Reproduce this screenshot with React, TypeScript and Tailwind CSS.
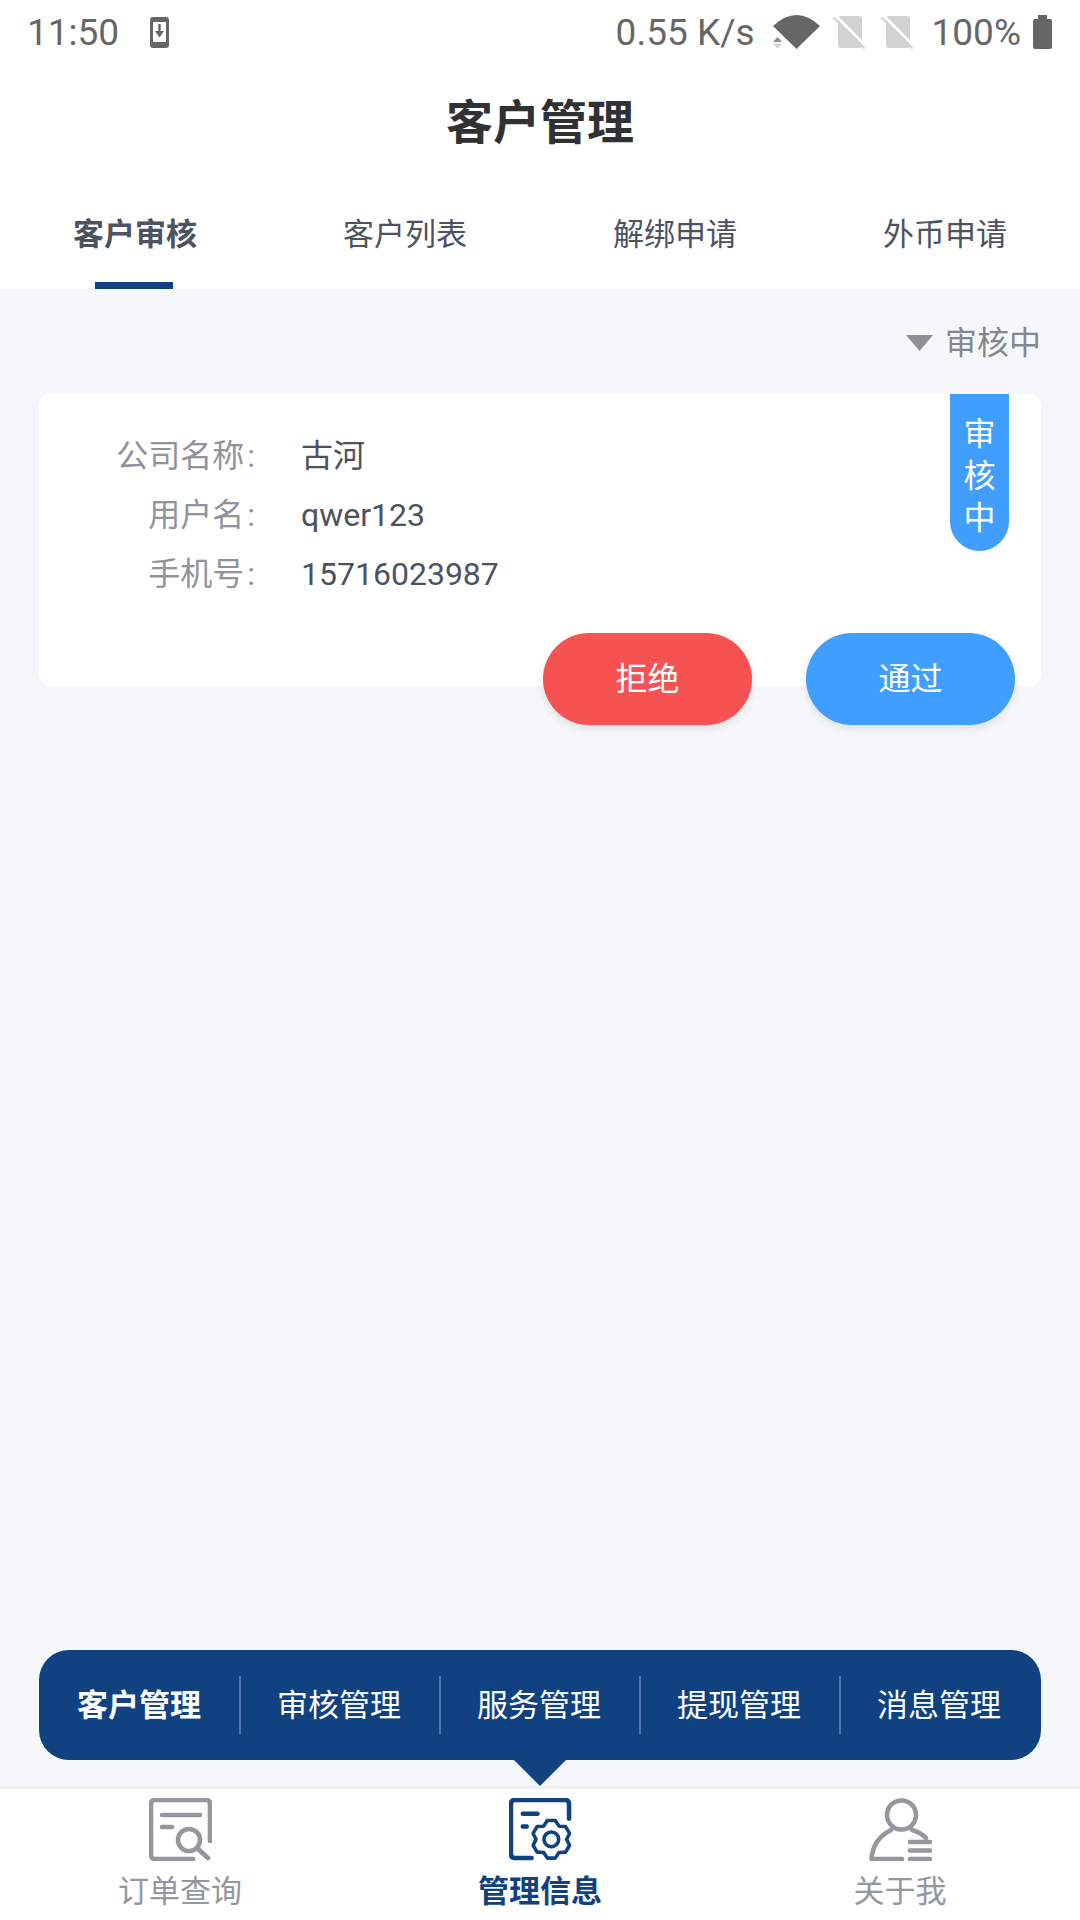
const fontStack = { fontFamily: '"Roboto", "Noto Sans CJK SC", sans-serif' };

const tabs = ["客户审核", "客户列表", "解绑申请", "外币申请"];
const menus = ["客户管理", "审核管理", "服务管理", "提现管理", "消息管理"];
const rows = [
  { label: "公司名称", value: "古河" },
  { label: "用户名", value: "qwer123" },
  { label: "手机号", value: "15716023987" },
];

const gearPath = () => {
  const cx = 43;
  const cy = 42;
  const pts: string[] = [];
  for (let k = 0; k < 6; k++) {
    const a = ((k * 60 - 90) * Math.PI) / 180;
    const at = (r: number, d: number) =>
      `${(cx + r * Math.cos(a + (d * Math.PI) / 180)).toFixed(1)} ${(cy + r * Math.sin(a + (d * Math.PI) / 180)).toFixed(1)}`;
    pts.push(at(15.5, -30), at(19.5, -12), at(19.5, 12));
  }
  return "M" + pts.join("L") + "Z";
};

const StatusIcons = () => (
  <div className="flex items-center">
    <svg width="47" height="34" viewBox="0 0 47 34" className="ml-[18px]">
      <path d="M0 11 Q23.5 -11 47 11 L23.5 34Z" fill="#666666" />
      <path d="M4.5 22 L9 27 H0Z" fill="#8a8a8a" />
      <path d="M0 28.5 H9 L4.5 33.5Z" fill="#d2d2d2" />
    </svg>
    {[0, 1].map((i) => (
      <svg key={i} width="33" height="33" viewBox="0 0 33 33" className={i === 0 ? "ml-[13px]" : "ml-[15px]"}>
        <path d="M5 3 Q5 0 8 0 H26 Q29 0 29 3 V29 Q29 32 26 32 H8 Q5 32 5 29Z" fill="#d2d2d2" />
        <path d="M3 0 L33 30" stroke="#ffffff" strokeWidth="2.6" />
        <path d="M1 2 L31 32" stroke="#d2d2d2" strokeWidth="2" strokeLinecap="round" />
      </svg>
    ))}
  </div>
);

const OrderIcon = () => (
  <svg width="63" height="63" viewBox="0 0 63 63" fill="none" stroke="#94979c" strokeWidth="4.6" strokeLinecap="round" strokeLinejoin="round">
    <path d="M61 43 V6 Q61 2 57 2 H6 Q2 2 2 6 V57 Q2 61 6 61 H44" />
    <path d="M13 17 H51 M13 29 H23" />
    <circle cx="40" cy="42" r="11" />
    <path d="M48 50 L59 60" />
  </svg>
);

const ManageIcon = () => (
  <svg width="63" height="63" viewBox="0 0 64 64" fill="none" stroke="#104282" strokeWidth="4.6" strokeLinecap="round" strokeLinejoin="round">
    <path d="M61 21 V6 Q61 2 57 2 H6 Q2 2 2 6 V57 Q2 61 6 61 H23" />
    <path d="M14 16 H29 M14 29 H18" />
    <path d={gearPath()} strokeWidth="3.6" />
    <circle cx="43" cy="42" r="7.5" strokeWidth="3.6" />
  </svg>
);

const MeIcon = () => (
  <svg width="63" height="63" viewBox="0 0 63 63" fill="none" stroke="#94979c" strokeWidth="4.6" strokeLinecap="round" strokeLinejoin="round">
    <circle cx="32.5" cy="17" r="14.5" />
    <path d="M33 61 H2.5 Q4 41 22 32" />
    <path d="M43 32 Q51 34 57 40" />
    <path d="M41 44 H61 M41 52.5 H61 M41 61 H61" />
  </svg>
);

export default function App() {
  return (
    <div className="flex h-[1920px] w-[1080px] flex-col overflow-hidden bg-[#f5f7fb]" style={fontStack}>
      <div className="bg-white">
        <div className="flex h-[64px] items-center pl-[27px] pr-[28px] text-[37px] leading-none text-[#666666]">
          <span>11:50</span>
          <svg width="19" height="31" viewBox="0 0 19 31" className="ml-[31px]">
            <rect width="19" height="31" rx="3" fill="#666666" />
            <rect x="3" y="5" width="13" height="20" fill="#ffffff" />
            <path d="M8.3 7 H10.7 V14 H14 L9.5 20.5 L5 14 H8.3Z" fill="#666666" />
          </svg>
          <span className="ml-auto">0.55 K/s</span>
          <StatusIcons />
          <span className="ml-[18px]">100%</span>
          <svg width="19" height="34" viewBox="0 0 19 34" className="ml-[12px]">
            <path d="M5 0 H14 V4 H17 Q19 4 19 6 V32 Q19 34 17 34 H2 Q0 34 0 32 V6 Q0 4 2 4 H5Z" fill="#666666" />
          </svg>
        </div>
        <div className="flex h-[116px] items-center justify-center text-[47px] font-bold leading-none text-[#303133]">
          客户管理
        </div>
        <div className="flex h-[109px]">
          {tabs.map((tab, i) => (
            <div key={tab} className="flex flex-1 flex-col items-center">
              <span className={`mt-[39px] text-[31px] leading-[32px] text-[#4d5260] ${i === 0 ? "font-bold" : ""}`}>{tab}</span>
              {i === 0 && <div className="mr-[2px] mt-auto h-[7px] w-[78px] bg-[#104282]" />}
            </div>
          ))}
        </div>
      </div>

      <div className="flex flex-1 flex-col px-[39px]">
        <div className="mt-[38px] flex items-center justify-end text-[32px] leading-[32px] text-[#85878c]">
          <svg width="27" height="16" viewBox="0 0 27 16" className="mr-[12px]">
            <path d="M0 0 H27 L13.5 16Z" fill="#8e9096" />
          </svg>
          审核中
        </div>

        <div className="relative mt-[35px] h-[292px] rounded-[12px] bg-white pt-[46px]">
          <div className="flex flex-col gap-[27px]">
            {rows.map((row) => (
              <div key={row.label} className="flex text-[32px] leading-[32px]">
                <span className="w-[216px] text-right text-[#909399]">
                  {row.label}
                  <span className="ml-[3px]">:</span>
                </span>
                <span className="ml-[46px] text-[#4d5260]">{row.value}</span>
              </div>
            ))}
          </div>

          <div className="absolute right-[32px] top-0 flex h-[157px] w-[59px] flex-col items-center rounded-b-full bg-[#409eff] pt-[19px] text-[32px] leading-[42px] text-white">
            <span>审</span>
            <span>核</span>
            <span>中</span>
          </div>

          <div className="absolute right-[26px] top-[239px] flex gap-[54px]">
            <button className="h-[92px] w-[209px] rounded-full bg-[#f75252] text-[32px] text-white shadow-[0_3px_8px_rgba(0,0,0,0.1)]">拒绝</button>
            <button className="h-[92px] w-[209px] rounded-full bg-[#409eff] text-[32px] text-white shadow-[0_3px_8px_rgba(0,0,0,0.1)]">通过</button>
          </div>
        </div>

        <div className="relative mb-[26px] mt-auto flex h-[110px] items-start rounded-[30px] bg-[#104282]">
          {menus.map((menu, i) => (
            <div key={menu} className={`mt-[26px] flex h-[58px] w-[200px] items-center justify-center pt-[2px] text-[31px] text-white ${i > 0 ? "border-l-2 border-[#4f78b0] pr-[2px]" : ""} ${i === 0 ? "font-bold" : ""}`}>
              {menu}
            </div>
          ))}
          <svg width="52" height="26" viewBox="0 0 52 26" className="absolute left-[475px] top-[110px]">
            <path d="M0 0 H52 L26 26Z" fill="#104282" />
          </svg>
        </div>
      </div>

      <div className="flex h-[134px] border-t-[3px] border-[#eeeeee] bg-white">
        <div className="flex w-[360px] flex-col items-center pt-[9px]">
          <OrderIcon />
          <span className="mt-[15px] text-[31px] leading-[32px] text-[#94979c]">订单查询</span>
        </div>
        <div className="flex w-[360px] flex-col items-center pt-[9px]">
          <ManageIcon />
          <span className="mt-[15px] text-[31px] font-bold leading-[32px] text-[#104282]">管理信息</span>
        </div>
        <div className="flex w-[360px] flex-col items-center pt-[9px]">
          <MeIcon />
          <span className="mt-[15px] text-[31px] leading-[32px] text-[#94979c]">关于我</span>
        </div>
      </div>
    </div>
  );
}
